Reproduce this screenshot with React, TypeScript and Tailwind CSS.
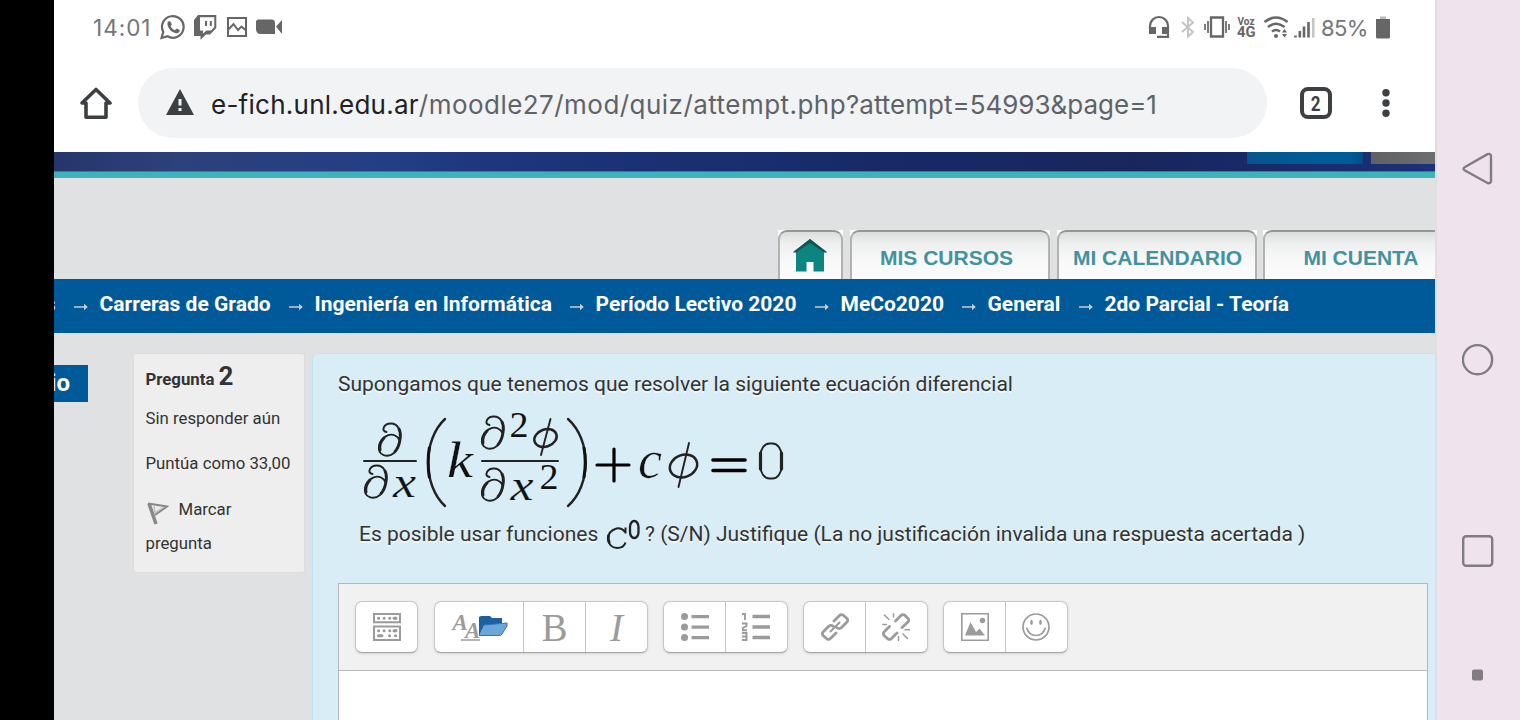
import React from "react";

const G = "#9b9b9b";

function StatusLeft() {
  return (
    <div className="flex items-center">
      <span className="w-[67px] whitespace-nowrap font-['Inter'] text-[22.500px] tracking-[1px] font-normal leading-none text-[#757575]">14:01</span>
      <svg width="130" height="28" viewBox="160 14 130 28" fill="none" stroke="#666" strokeWidth="2">
        <path d="M161.500 38L163.300 32A10.800 10.800 0 1 1 167.500 36.300Z" strokeWidth="2.200" />
        <path d="M167.500 22.500c1-2 3-1.500 3.500 0l.8 2-1.200 1.800c1 2 2.300 3.200 4.300 4l1.900-1.700 2.800 1.400c.8 2-2 3.800-4 3.200-4.500-1.200-8.600-5.600-8.100-10.700z" fill="#666" stroke="none" />
        <path d="M198 15H216.300V28L210 34.500H206L200.500 39.800V36H194V20Z" fill="#666" stroke="none" />
        <path d="M200 17.300H214.300V27L211 30.500H206.500L203 33.500V30.500H200Z" fill="#fff" stroke="none" />
        <path d="M206 21V26M210.800 21V26" />
        <path d="M228 18H246V36H228ZM228 30L233.500 24L238 30L241.500 26.500L246 30.500" />
        <path d="M258.500 19.500H271.500Q275 19.500 275 23V34H261Q256 34 256 29V22Q256 19.500 258.500 19.500ZM276 26.500L282 20V34Z" fill="#666" stroke="none" />
      </svg>
    </div>
  );
}

function StatusRight() {
  return (
    <div className="flex items-center">
      <svg width="173" height="28" viewBox="1146 14 173 28" fill="none" stroke="#666" strokeWidth="2">
        <path d="M1150 30V26A8.800 8.800 0 0 1 1168 26V36.800H1157" strokeWidth="2.200" />
        <path d="M1149 27H1156V34H1149ZM1162 27H1169V34H1162Z" fill="#666" stroke="none" />
        <path d="M1182 22L1193 32L1188 36.500V18L1193 22.500L1182 32" stroke="#c5c5c5" />
        <path d="M1211 17.500H1223V36.500H1211Z" strokeWidth="2.300" />
        <path d="M1208 21V33M1205 24V30M1226 21V33M1229 24V30" strokeWidth="1.700" />
        <text x="1237.500" y="25" textLength="17" lengthAdjust="spacingAndGlyphs" fill="#666" stroke="none" fontFamily="Roboto" fontWeight="700" fontSize="11">Voz</text>
        <text x="1237" y="36.500" textLength="18.500" lengthAdjust="spacingAndGlyphs" fill="#666" stroke="none" fontFamily="Roboto" fontWeight="700" fontSize="14.500">4G</text>
        <path d="M1264.500 22Q1276 13 1287.500 22M1268 27Q1276 20.500 1284.500 27M1272 31.500Q1276 28.500 1280 31.500" strokeWidth="2.600" />
        <circle cx="1276" cy="36" r="2" fill="#666" stroke="none" />
        <path d="M1282 32.500L1284.500 29L1287 32.500ZM1282 34L1284.500 37.500L1287 34Z" fill="#666" stroke="none" />
        <path d="M1295.500 35.500V37.500M1299.800 31V37.500M1304 26.500V37.500M1308.500 22V37.500" strokeWidth="2.600" />
        <path d="M1313.300 18V37.500" strokeWidth="2.500" stroke="#c5c5c5" />
      </svg>
      <span className="ml-[2px] w-[55px] whitespace-nowrap font-['Inter'] text-[22px] font-normal tracking-[-0.6px] leading-none text-[#757575]">85%</span>
      <svg className="-mt-[2px]" width="14" height="23" viewBox="0 0 14 23">
        <path d="M4 0.500H10V3H4Z" fill="#bbb" />
        <path d="M0 3H14V21Q14 22.500 12.500 22.500H1.500Q0 22.500 0 21Z" fill="#666" />
      </svg>
    </div>
  );
}

function Browser() {
  return (
    <header className="h-[152px] shrink-0 bg-white">
      <div className="flex h-[56px] items-center justify-between pl-[39px] pr-[45px]">
        <StatusLeft />
        <StatusRight />
      </div>
      <div className="flex items-center pl-[26px] pt-[12px]">
        <svg width="32" height="34" viewBox="80 86 32 34" fill="none" stroke="#3c4043" strokeWidth="3.600" strokeLinejoin="round">
          <path d="M82 103L96 89.500L110 103H106V117.300H86V103Z" />
        </svg>
        <div className="ml-[26px] flex h-[70px] w-[1129px] items-center rounded-full bg-[#f1f3f4] pl-[28px] pt-[2px]">
          <svg className="-mt-[4px]" width="28" height="26" viewBox="0 0 28 26">
            <path d="M14 0L28 26H0Z" fill="#3c4043" />
            <path d="M12.500 10H15.500V16.500H12.500ZM12.500 19H15.500V22H12.500Z" fill="#f1f3f4" />
          </svg>
          <p className="ml-[17px] mt-[2px] whitespace-nowrap font-['Inter'] text-[26px] leading-none text-[#5f6368]">
            <span className="tracking-[0.250px] text-[#202124]">e-fich.unl.edu.ar</span>
            <span className="tracking-[0.460px]">/moodle27/mod/quiz/attempt.php</span>
            <span>?attempt=54993&amp;page=1</span>
          </p>
        </div>
        <div className="ml-[33px] flex size-[32px] items-center justify-center rounded-[8px] border-4 border-[#3c4043] pt-[1px] font-['Roboto'] text-[20px] font-bold leading-none text-[#3c4043]"><span className="scale-x-85">2</span></div>
        <svg className="ml-[50px]" width="8" height="28" viewBox="0 0 8 28" fill="#3c4043">
          <circle cx="4" cy="3.700" r="3.700" /><circle cx="4" cy="14" r="3.700" /><circle cx="4" cy="24.300" r="3.700" />
        </svg>
      </div>
    </header>
  );
}

function Banner() {
  return (
    <div className="h-[26px] shrink-0">
      <div className="flex h-[19px] bg-[linear-gradient(90deg,#26366c_0%,#2d417a_9%,#243f84_23%,#1c3479_35%,#172a66_60%,#19265c_78%,#182a68_88%,#1d3179_100%)]">
        <div className="ml-[1193px] h-[12px] w-[116px] bg-[linear-gradient(90deg,#07548c,#005c96_50%,#005c96_90%,#064b83)]" />
        <div className="ml-[8px] h-[12px] w-[64px] bg-[linear-gradient(90deg,#606166,#6d6e72)]" />
      </div>
      <div className="h-[7px] border-t border-[#2982a2] bg-[#3eb3b9]" />
    </div>
  );
}

function Tab({ w, children }: { w: string; children: React.ReactNode }) {
  return (
    <div className={"flex h-[49px] shrink-0 bg-white " + w}>
      <div className="flex h-full w-full items-center justify-center rounded-t-[9px] border-2 border-b-0 border-[#b2b3b1] border-t-[#969793] bg-[linear-gradient(180deg,#dcdddd_0%,#eeefef_25%,#f8f8f8_60%,#fcfcfc_100%)] pt-[4px] font-['Liberation_Sans'] text-[21px] font-bold leading-none text-[#4392a0]">
        {children}
      </div>
    </div>
  );
}

function Tabs() {
  return (
    <nav className="flex h-[101px] shrink-0 items-end overflow-hidden pl-[724px]">
      <Tab w="w-[65px]">
        <svg className="-mt-[5px] -ml-[2px]" width="34" height="35" viewBox="0 0 34 35">
          <path d="M17 1L34 14H31V33.500H20.500V24H13.500V33.500H3V14H0Z" fill="#0c8581" />
          <path d="M17 1L34 14.500H31L17 5L3 14.500H0Z" fill="#165351" />
        </svg>
      </Tab>
      <div className="ml-[7px]"><Tab w="w-[200px]"><span className="-ml-[7px] whitespace-nowrap">MIS CURSOS</span></Tab></div>
      <div className="ml-[7px]"><Tab w="w-[200px]"><span className="ml-[1px] whitespace-nowrap">MI CALENDARIO</span></Tab></div>
      <div className="ml-[6px]"><Tab w="w-[200px]"><span className="-ml-[4px] whitespace-nowrap">MI CUENTA</span></Tab></div>
    </nav>
  );
}

const crumbs: [string, string][] = [
  ["Carreras de Grado", "w-[171px]"],
  ["Ingeniería en Informática", "w-[237px]"],
  ["Período Lectivo 2020", "w-[201px]"],
  ["MeCo2020", "w-[103px]"],
  ["General", "w-[73px]"],
  ["2do Parcial - Teoría", "w-[190px]"],
];

function Breadcrumb() {
  return (
    <div className="flex h-[54px] shrink-0 items-center bg-[#005999] pb-[4px] font-['Roboto'] text-[21px] font-bold leading-none text-white">
      <span className="flex w-[1.500px] justify-end overflow-hidden">s</span>
      {crumbs.map(([t, w]) => (
        <React.Fragment key={t}>
          <svg className="ml-[18px] mr-[12px] mt-[6px] shrink-0" width="14" height="8" viewBox="0 0 14 8" fill="#cccccc"><path d="M0 3.200H10V0.800L13.800 4L10 7.200V4.800H0Z" /></svg>
          <span className={"shrink-0 whitespace-nowrap " + w}>{t}</span>
        </React.Fragment>
      ))}
    </div>
  );
}

function Equation() {
  return (
    <svg width="424" height="98" viewBox="362 411 424 98" fill="#111" fontFamily="'Liberation Serif', serif" className="ml-[24px] overflow-visible">
      <g fill="none" stroke="#222" strokeWidth="1.900" strokeLinecap="round">
        <g id="pd">
          <path d="M386.500 432Q382 431 384 427C386.500 422.500 395 422 398.500 428C402.500 434 399.500 448 394 453C388 458 377.500 456 379 446C380.500 438 389 432.500 395 435.500Q399 437.500 400 441" />
          <path d="M399 429C402 435 399.500 447 395 451.500M380 450C379 444 382 440 384 438" strokeWidth="2.900" />
        </g>
        <use href="#pd" x="-14" y="42" />
        <use href="#pd" x="103" y="-7" />
        <use href="#pd" x="103" y="45" />
        <path d="M445 419C422.500 440 422.500 485 445 506" strokeWidth="2.400" />
        <path d="M568 419C591.500 440 591.500 485 568 506" strokeWidth="2.400" />
        <path d="M429.300 448Q427 462 429.300 477M584 448Q586.500 462 584 477" strokeWidth="3" stroke="#111" />
        <path d="M364 461H416M482 461H558" strokeWidth="2" />
        <path d="M597 465H629M614 449V481" strokeWidth="3.200" stroke="#000" />
        <path d="M713 460H745M713 470.500H745" strokeWidth="3.600" stroke="#000" />
        <ellipse cx="545.500" cy="438" rx="11.500" ry="8.500" transform="rotate(-20 545.500 438)" strokeWidth="2.500" /><path d="M550.500 419L541 455" />
        <ellipse cx="683.500" cy="466" rx="14" ry="11" transform="rotate(-20 683.500 466)" strokeWidth="2.500" /><path d="M689 443L678.500 487" />
        <rect x="760.500" y="443.500" width="21" height="35" rx="9" ry="12" strokeWidth="2" />
        <path d="M760.500 453V469M781.500 453V469" strokeWidth="3.200" />
      </g>
      <g stroke="#d9edf6" strokeWidth="0.200">
        <text x="393" y="497" fontSize="44" fontStyle="italic" textLength="23" lengthAdjust="spacingAndGlyphs">x</text>
        <text x="447" y="477" fontSize="50" fontStyle="italic" textLength="26" lengthAdjust="spacingAndGlyphs">k</text>
        <text x="509.500" y="437" fontSize="36" textLength="19" lengthAdjust="spacingAndGlyphs" stroke="none">2</text>
        <text x="510.500" y="500" fontSize="44" fontStyle="italic" textLength="23" lengthAdjust="spacingAndGlyphs">x</text>
        <text x="539.500" y="489" fontSize="36" textLength="19" lengthAdjust="spacingAndGlyphs" stroke="none">2</text>
        <text x="638" y="478" fontSize="54" fontStyle="italic" textLength="24" lengthAdjust="spacingAndGlyphs" strokeWidth="0.500">c</text>
      </g>
    </svg>
  );
}

function Btn({ w, children }: { w: string; children: React.ReactNode }) {
  return <div className={"flex h-full items-center justify-center border-l border-[#c4c4c4] first:border-l-0 " + w}>{children}</div>;
}

function Group({ m, children }: { m: string; children: React.ReactNode }) {
  return <div className={"flex h-[52px] shrink-0 overflow-hidden rounded-[7px] border border-[#c6c6c6] border-b-[#a5a5a5] bg-white shadow-sm " + m}>{children}</div>;
}

function Toolbar() {
  return (
    <div className="flex h-[87px] items-center border-b border-[#b4b8ba] bg-[#f1f1f1] pl-[16px]">
      <Group m="">
        <Btn w="w-[61px]">
          <svg width="28" height="28" viewBox="0 0 28 28" fill="none" stroke={G} strokeWidth="2">
            <path d="M1 1H27V9.300H1ZM1 13.500H27V27H1Z" />
            <path d="M5.500 5.300H23" strokeWidth="3" strokeLinecap="round" strokeDasharray="0.100 5.500" />
            <path d="M5.500 17.800H23" strokeWidth="3" strokeLinecap="round" strokeDasharray="0.100 5.500" />
            <path d="M5.500 22.800H9M16.500 22.800H16.600M22.500 22.800H22.600M21 5.300H23M21 17.800H23" strokeWidth="3" strokeLinecap="round" />
          </svg>
        </Btn>
      </Group>
      <Group m="ml-[16px]">
        <Btn w="w-[88px]">
          <svg className="ml-[2px] overflow-visible" width="58" height="32" viewBox="451 611 58 32">
            <g fill={G} fontFamily="'Liberation Serif'" fontStyle="italic" fontWeight="700">
              <text x="452.500" y="629.500" fontSize="23">A</text>
              <text x="465" y="638" fontSize="23">A</text>
            </g>
            <path d="M461 640H480" stroke={G} strokeWidth="1.500" />
            <path d="M479 617L481 616H490L492 618H502V623L498 634L479 635Z" fill="#1c60a2" />
            <path d="M484 625L507 623V626L502 634Q501 636 498 635.500H479Z" fill="#6ca6d9" />
            <path d="M484 625L507 623V626L502 634Q501 636 498 635.500H479" fill="none" stroke="#2b78bb" />
          </svg>
        </Btn>
        <Btn w="w-[62px]"><span className="font-['Liberation_Serif'] text-[39px] leading-none text-[#9b9b9b]">B</span></Btn>
        <Btn w="w-[62px]"><span className="font-['Liberation_Serif'] text-[39px] italic leading-none text-[#9b9b9b]">I</span></Btn>
      </Group>
      <Group m="ml-[15px]">
        <Btn w="w-[61px]">
          <svg width="28" height="28" viewBox="0 0 28 28" fill={G}>
            <circle cx="3.500" cy="3.500" r="3.500" /><circle cx="3.500" cy="14" r="3.500" /><circle cx="3.500" cy="24.500" r="3.500" />
            <path d="M10.500 2H28V5.300H10.500ZM10.500 12.500H28V15.800H10.500ZM10.500 23H28V26.300H10.500Z" />
          </svg>
        </Btn>
        <Btn w="w-[62px]">
          <svg className="-ml-[2px]" width="28" height="28" viewBox="0 0 28 28" fill="none" stroke={G}>
            <path d="M10.500 3.500H28M10.500 14H28M10.500 24.500H28" strokeWidth="3.300" />
            <path d="M0 1H3V7M0 10.500H4.500V13L.8 15V17.300H5M0 20H4.500V27H0M0 23.500H4.500" strokeWidth="1.900" />
          </svg>
        </Btn>
      </Group>
      <Group m="ml-[15px]">
        <Btn w="w-[61px]">
          <svg width="28" height="28" viewBox="0 0 28 28" fill="none" stroke={G} strokeWidth="2.800" strokeLinecap="round" strokeLinejoin="round">
            <path d="M13 8L18.500 2.500Q20 1 22 2L26 5.500Q27.500 7 26 9L20 15Q18 16.500 15.500 14.500M15 20L9.500 25.500Q8 27 6 26L2 22.500Q.8 20.500 2 19L8 13Q10 11.500 12.500 13.500" />
            <path d="M9.500 18.500L18.500 9.500" strokeWidth="2" />
          </svg>
        </Btn>
        <Btn w="w-[62px]">
          <svg className="-ml-[2px]" width="28" height="28" viewBox="0 0 28 28" fill="none" stroke={G} strokeWidth="2.800" strokeLinecap="round" strokeLinejoin="round">
            <path d="M13.500 8L19 2.500Q20.500 1 22.500 2L26 5.500Q27.500 7 26 9L20 14.500M15 20L9.500 25.500Q8 27 6 26L2 22.500Q.8 20.500 2 19L7.500 13.500" />
            <path d="M2.500 2L7 6.500M11.500.8V4M.8 11.500H4.500M23 16.800H27.500M16.500 23.500V27.300M21 21L25.500 25.500" strokeWidth="1.500" />
          </svg>
        </Btn>
      </Group>
      <Group m="ml-[15px]">
        <Btn w="w-[61px]">
          <svg width="28" height="28" viewBox="0 0 28 28">
            <path d="M.8.8H27.200V27.200H.8Z" fill="none" stroke={G} strokeWidth="1.600" />
            <path d="M4 22.500L9.500 9L15 19L18.500 15.500L24 22.500Z" fill={G} /><circle cx="21.500" cy="7.500" r="2.700" fill={G} />
          </svg>
        </Btn>
        <Btn w="w-[62px]">
          <svg className="-ml-[2px]" width="28" height="28" viewBox="0 0 28 28" fill="none" stroke={G} strokeWidth="1.700">
            <circle cx="14" cy="14" r="13" /><path d="M4.500 14.500Q7 22.500 14 22.500T23.500 14.500" />
            <path d="M9.500 8.200V10.500M18.500 8.200V10.500" strokeWidth="2.500" strokeLinecap="round" />
          </svg>
        </Btn>
      </Group>
    </div>
  );
}

function Quiz() {
  return (
    <main className="flex h-[387px] items-start pt-[20px]">
      <div className="mt-[12px] flex h-[37px] w-[34px] shrink-0 justify-end overflow-hidden bg-[#005999] pr-[18px] pt-[6px] font-['Roboto'] text-[24px] font-bold leading-none text-white">io</div>
      <aside className="ml-[45px] h-[220px] w-[172px] shrink-0 rounded-[3px] border border-[#dcdcdc] bg-[#eeeeee] pl-[11.500px] font-['Roboto'] text-[16.800px] text-[#333]">
        <p className="mt-[9px] h-[30px] whitespace-nowrap font-bold leading-[30px]">Pregunta <span className="text-[26px] leading-none">2</span></p>
        <p className="mt-[13px] h-[24px] whitespace-nowrap leading-[24px]">Sin responder aún</p>
        <p className="mt-[21px] h-[24px] whitespace-nowrap leading-[24px]">Puntúa como 33,00</p>
        <p className="mt-[18px] flex h-[34px] items-center whitespace-nowrap">
          <svg className="mr-[10px] -ml-[1px] mt-[6px]" width="24" height="24" viewBox="0 0 24 24" fill="none" stroke="#888"><path d="M4 2.500L11 23" strokeWidth="3.500" /><path d="M3 2.500L22 5.500L10 14" strokeWidth="2" /><path d="M9 5L10 12L19 6" stroke="#bbb" strokeWidth="1.500" /></svg>
          Marcar
        </p>
        <p className="-mt-[1px] h-[34px] leading-[34px]">pregunta</p>
      </aside>
      <section className="ml-[7px] h-[367px] min-w-0 flex-1 rounded-tl-[6px] border-l border-t border-[#bce8f1] bg-[#d9edf6] pl-[25px] font-['Roboto'] text-[21px] text-[#333]">
        <p className="mt-[16px] h-[28px] whitespace-nowrap leading-[28px] [text-shadow:0_2px_0_#f0f8fb]">Supongamos que tenemos que resolver la siguiente ecuación diferencial</p>
        <div className="mt-[13px] h-[98px]"><Equation /></div>
        <p className="ml-[21px] mt-[6px] flex h-[40px] items-center whitespace-nowrap [text-shadow:0_2px_0_#f0f8fb]">
          <span className="w-[247px]">Es posible usar funciones</span>
          <svg width="37" height="32" viewBox="0 0 37 32" fill="none" stroke="#222" strokeWidth="2">
            <path d="M19.500 14.500V8.500M19 13Q15.500 8.500 10.500 9.500Q2 12 2 20Q3 28.500 11 29Q18 29 19.500 23.500" />
            <path d="M2.800 16Q1.500 20 3.500 24" strokeWidth="2.800" />
            <rect x="24" y="2" width="8.500" height="17" rx="4.200" ry="6" strokeWidth="2.300" />
          </svg>
          <span className="ml-[2px]">? (S/N) Justifique (La no justificación invalida una respuesta acertada )</span>
        </p>
        <div className="mt-[28px] h-[150px] w-[1090px] border border-[#b4b8ba] bg-white"><Toolbar /></div>
      </section>
    </main>
  );
}

export default function App() {
  return (
    <div className="flex h-[720px] w-[1520px] overflow-hidden bg-black pl-[54px]">
      <div className="flex w-[1381px] shrink-0 flex-col overflow-hidden bg-[#dfe1e3]">
        <Browser />
        <Banner />
        <Tabs />
        <Breadcrumb />
        <Quiz />
      </div>
      <div className="flex w-[85px] shrink-0 flex-col items-center border-l-2 border-[#dedee0] bg-[#efe4ed] pr-[1px]">
        <svg width="32" height="720" viewBox="0 0 32 720" fill="none" stroke="#807c80" strokeWidth="2.400">
          <path d="M3 167L25.500 154.200Q29 153 29 156.500V181Q28.500 184 25.500 183L3 170.500Q0 168.500 3 167Z" />
          <circle cx="15.500" cy="359.700" r="14.600" />
          <rect x="1.200" y="536.200" width="29" height="29.500" rx="3" />
          <rect x="10" y="669.500" width="11" height="11" rx="2" fill="#807c80" stroke="none" />
        </svg>
      </div>
    </div>
  );
}
